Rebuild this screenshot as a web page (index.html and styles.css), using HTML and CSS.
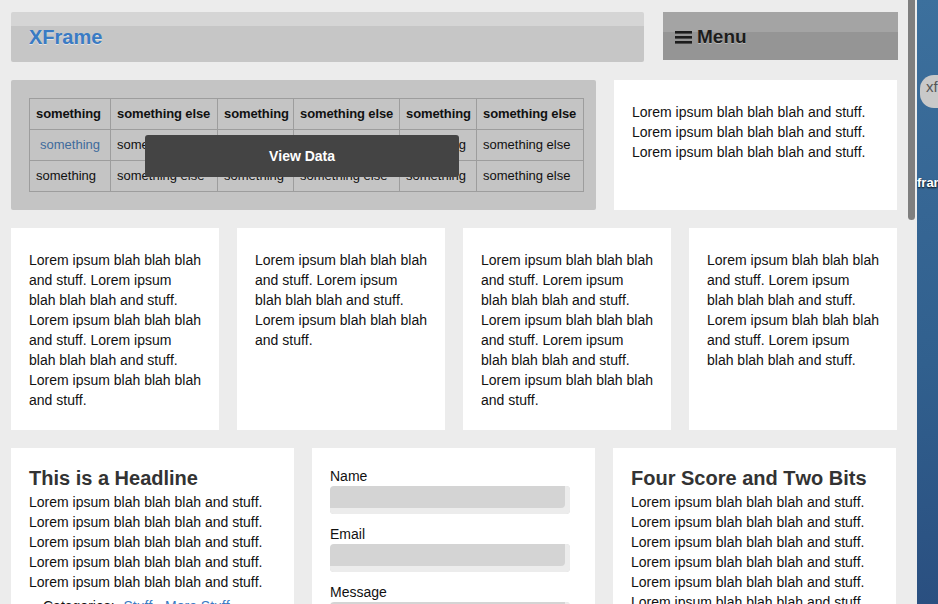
FILE: index.html
```html
<!DOCTYPE html>
<html>
<head>
<meta charset="utf-8">
<title>XFrame</title>
<link rel="stylesheet" href="styles.css">
</head>
<body class="screen">
  <div class="window">
    <main class="page">
      <header class="topbar">
        <div class="brand-bar"><a class="brand">XFrame</a></div>
        <div class="menu-bar">
          <svg class="burger" width="17" height="13" viewBox="0 0 17 13"><rect x="0" y="0" width="17" height="2.6" fill="#1c1c1c"/><rect x="0" y="5" width="17" height="2.6" fill="#1c1c1c"/><rect x="0" y="10" width="17" height="2.6" fill="#1c1c1c"/></svg>
          <span class="menu-label">Menu</span>
        </div>
      </header>

      <section class="row top">
        <div class="panel table-panel">
          <div class="table-wrap">
            <table class="data">
              <colgroup><col class="wa"><col class="wb"><col class="wc"><col class="wd"><col class="we"><col class="wb"></colgroup>
              <tr><th>something</th><th>something else</th><th>something</th><th>something else</th><th>something</th><th>something else</th></tr>
              <tr><td class="link">something</td><td>something else</td><td>something</td><td>something else</td><td>something</td><td>something else</td></tr>
              <tr><td>something</td><td>something else</td><td>something</td><td>something else</td><td>something</td><td>something else</td></tr>
            </table>
            <div class="view-data">View Data</div>
          </div>
        </div>
        <div class="card text-card">
          <p>Lorem ipsum blah blah blah and stuff. Lorem ipsum blah blah blah and stuff. Lorem ipsum blah blah blah and stuff.</p>
        </div>
      </section>

      <section class="row four">
        <div class="card text-card narrow"><p>Lorem ipsum blah blah blah and stuff. Lorem ipsum blah blah blah and stuff. Lorem ipsum blah blah blah and stuff. Lorem ipsum blah blah blah and stuff. Lorem ipsum blah blah blah and stuff.</p></div>
        <div class="card text-card narrow"><p>Lorem ipsum blah blah blah and stuff. Lorem ipsum blah blah blah and stuff. Lorem ipsum blah blah blah and stuff.</p></div>
        <div class="card text-card narrow"><p>Lorem ipsum blah blah blah and stuff. Lorem ipsum blah blah blah and stuff. Lorem ipsum blah blah blah and stuff. Lorem ipsum blah blah blah and stuff. Lorem ipsum blah blah blah and stuff.</p></div>
        <div class="card text-card narrow"><p>Lorem ipsum blah blah blah and stuff. Lorem ipsum blah blah blah and stuff. Lorem ipsum blah blah blah and stuff. Lorem ipsum blah blah blah and stuff.</p></div>
      </section>

      <section class="row three">
        <article class="card article">
          <h2>This is a Headline</h2>
          <p>Lorem ipsum blah blah blah and stuff. Lorem ipsum blah blah blah and stuff. Lorem ipsum blah blah blah and stuff. Lorem ipsum blah blah blah and stuff. Lorem ipsum blah blah blah and stuff.</p>
          <div class="cats">Categories: <a>Stuff</a>, <a>More Stuff</a></div>
        </article>
        <form class="card form">
          <label>Name</label>
          <div class="field"></div>
          <label>Email</label>
          <div class="field"></div>
          <label>Message</label>
          <div class="field"></div>
        </form>
        <article class="card article">
          <h2>Four Score and Two Bits</h2>
          <p>Lorem ipsum blah blah blah and stuff. Lorem ipsum blah blah blah and stuff. Lorem ipsum blah blah blah and stuff. Lorem ipsum blah blah blah and stuff. Lorem ipsum blah blah blah and stuff. Lorem ipsum blah blah blah and stuff. Lorem ipsum blah blah blah and stuff.</p>
        </article>
      </section>
    </main>
    <div class="scroll-track"><div class="thumb"></div></div>
  </div>
  <div class="desktop">
    <div class="bubble">xf</div>
    <div class="icon-label">fram</div>
  </div>
</body>
</html>
```

FILE: styles.css
```css
* { box-sizing: border-box; }
html, body { margin: 0; padding: 0; }
.screen {
  display: flex;
  width: 938px;
  height: 604px;
  overflow: hidden;
  font-family: "Liberation Sans", Arial, Helvetica, sans-serif;
  font-kerning: none;
  color: #111;
  background: #ececec;
}
.window {
  display: flex;
  width: 917px;
  height: 604px;
  background: #ececec;
}
.page {
  width: 904px;
  height: 604px;
  overflow: hidden;
  padding: 12px 0 0 11px;
}
.topbar {
  display: flex;
  align-items: flex-start;
  gap: 19px;
}
.brand-bar {
  width: 633px;
  height: 50px;
  border-radius: 2px;
  background: linear-gradient(#d5d5d5 0, #d5d5d5 14px, #c6c6c6 14px, #c6c6c6 100%);
  display: flex;
  align-items: center;
  padding-left: 18px;
}
.brand {
  font-size: 20px;
  font-weight: bold;
  color: #3a7bc4;
  text-shadow: 0 1px 0 rgba(255,255,255,0.55);
  line-height: 24px;
  margin-top: -1px;
}
.menu-bar {
  width: 235px;
  height: 48px;
  background: linear-gradient(#a4a4a4 0, #a4a4a4 20px, #959595 20px, #959595 100%);
  display: flex;
  align-items: center;
  padding-left: 12px;
  padding-top: 2px;
  gap: 5px;
}
.burger { display: block; margin-top: 1px; }
.menu-label {
  font-size: 19px;
  font-weight: bold;
  color: #1c1c1c;
  text-shadow: 0 1px 0 rgba(255,255,255,0.35);
  line-height: 24px;
}
.row {
  display: grid;
  gap: 18px;
  margin-top: 18px;
  width: 886px;
}
.row.top { grid-template-columns: 585px 283px; }
.row.three { grid-template-columns: 283px 283px 283px; }
.row.four { grid-template-columns: repeat(4, 208px); }
.card { background: #fff; }
.panel {
  background: #c4c4c4;
  border-radius: 2px;
  padding: 18px 13px 18px 18px;
}
.table-wrap { position: relative; width: max-content; }
.data {
  border-collapse: collapse;
  table-layout: fixed;
  width: 554px;
  font-size: 13px;
  line-height: 16px;
}
.data col.wa { width: 81px; }
.data col.wb { width: 107px; }
.data col.wc { width: 76px; }
.data col.wd { width: 106px; }
.data col.we { width: 77px; }
.data th, .data td {
  border: 1px solid #9d9d9d;
  padding: 7px 4px 7px 6px;
  text-align: left;
  white-space: nowrap;
  overflow: hidden;
  height: 31px;
}
.data th { font-weight: bold; color: #111; letter-spacing: -0.1px; }
.data td.link { color: #3f6b9c; text-align: center; padding-left: 6px; padding-right: 6px; }
.view-data {
  position: absolute;
  left: 116px;
  top: 37px;
  width: 314px;
  height: 42px;
  background: #444;
  border-radius: 3px;
  color: #fff;
  font-size: 14px;
  font-weight: bold;
  display: flex;
  align-items: center;
  justify-content: center;
}
.text-card {
  padding: 22px 18px 20px 18px;
  font-size: 14px;
  line-height: 20px;
}
.text-card.narrow { padding-right: 17.6px; }
.text-card p, .article p { margin: 0; }
.article {
  padding: 18px 18px 0 18px;
  font-size: 14px;
  line-height: 20px;
}
.article h2 {
  margin: 0;
  font-size: 20px;
  line-height: 25px;
  margin-bottom: 1px;
  color: #333;
  font-weight: bold;
}
.cats { margin-top: 4px; padding-left: 14px; }
.cats a { color: #3a7bc4; text-decoration: underline; margin-left: 5px; }
.form {
  padding: 18px 18px 0 18px;
  font-size: 14px;
  line-height: 20px;
  display: flex;
  flex-direction: column;
  align-items: flex-start;
}
.form label { display: block; }
.field {
  width: 240px;
  height: 28px;
  border-radius: 4px;
  background: #d4d4d4;
  box-shadow: inset -5px -6px 0 #ececec;
  margin-bottom: 10px;
}
.scroll-track {
  width: 13px;
  height: 604px;
  padding-left: 4px;
}
.thumb {
  width: 7px;
  height: 220px;
  background: #7f7f7f;
  border-radius: 0 0 4px 4px;
}
.desktop {
  position: relative;
  width: 21px;
  height: 604px;
  background: linear-gradient(170deg, #3c709d 0%, #366694 35%, #31608e 60%, #2a4f80 100%);
  overflow: hidden;
}
.bubble {
  position: absolute;
  left: 3px;
  top: 75px;
  width: 40px;
  height: 33px;
  border-radius: 14px;
  background: #c9c9c9;
  color: #555;
  font-size: 15px;
  line-height: 18px;
  padding: 3px 0 0 6px;
}
.icon-label {
  position: absolute;
  left: 0;
  top: 175px;
  color: #fff;
  font-size: 13px;
  font-weight: bold;
  text-shadow: 0 1px 2px #000;
}
```
